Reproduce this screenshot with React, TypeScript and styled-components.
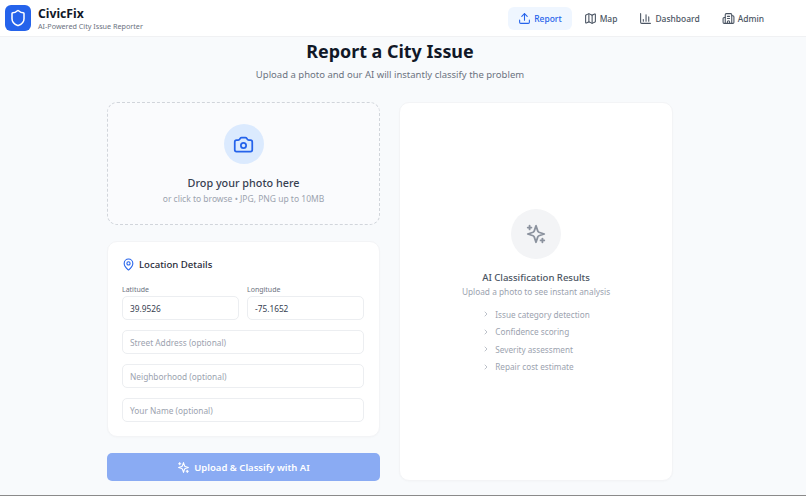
import React from "react";
import styled, { createGlobalStyle } from "styled-components";
import { Shield, Upload, Map, ChartColumn, Building2, Camera, MapPin, ChevronRight } from "lucide-react";

const Global = createGlobalStyle`
  html, body { margin: 0; padding: 0; height: 100%; }
  body { font-family: "Noto Sans", "Open Sans", sans-serif; background: #f8fafc; overflow: hidden; }
  #root { height: 496px; }
`;

const Page = styled.div`
  width: 806px; height: 496px; box-sizing: border-box; overflow: hidden;
  border-bottom: 1px solid #8a8a8a; display: flex; flex-direction: column;
`;
const Header = styled.header`
  height: 37px; flex: none; box-sizing: border-box; background: #fff; border-bottom: 1px solid #f0f1f3;
  display: flex; align-items: center; justify-content: space-between; padding: 0 32px 0 5px;
`;
const Brand = styled.div`display: flex; align-items: center; gap: 7px;`;
const Logo = styled.div`
  width: 26px; height: 26px; border-radius: 6px; background: #2563eb; color: #fff;
  display: flex; align-items: center; justify-content: center;
`;
const BrandText = styled.div`display: flex; flex-direction: column;`;
const BrandName = styled.div`font-size: 12.2px; font-weight: 700; color: #111827; line-height: 15px;`;
const BrandSub = styled.div`font-size: 7.2px; color: #6b7280; line-height: 10px;`;
const Nav = styled.nav`display: flex; align-items: center; gap: 2px;`;
const NavItem = styled.div<{ $active?: boolean }>`
  height: 23px; padding: 0 10px; border-radius: 6px; display: flex; align-items: center; gap: 3px;
  font-size: 8.45px; font-weight: 500; color: ${p => (p.$active ? "#2563eb" : "#4b5563")};
  background: ${p => (p.$active ? "#eff6ff" : "transparent")};
`;
const Main = styled.main`flex: 1; display: flex; flex-direction: column; align-items: center; padding-right: 26px;`;
const Title = styled.h1`margin: 2px 0 0; font-size: 17.9px; line-height: 24px; font-weight: 700; color: #111827;`;
const Subtitle = styled.p`margin: 5px 0 0; font-size: 9.5px; line-height: 14px; color: #6b7280;`;
const Columns = styled.div`
  margin-top: 20px; width: 566px; display: grid; grid-template-columns: 273px 274px; gap: 19px;
`;
const Left = styled.div`display: flex; flex-direction: column; gap: 16px;`;
const Drop = styled.div`
  height: 123px; box-sizing: border-box; border: 1px dashed #d1d5db; border-radius: 10px; background: #fafbfd;
  display: flex; flex-direction: column; align-items: center; padding-top: 21px;
`;
const CameraCircle = styled.div`
  width: 40px; height: 40px; border-radius: 50%; background: #dbeafe; color: #2563eb;
  display: flex; align-items: center; justify-content: center;
`;
const DropTitle = styled.div`margin-top: 12px; font-size: 10.8px; line-height: 14px; font-weight: 500; color: #374151;`;
const DropSub = styled.div`margin-top: 3px; font-size: 8.5px; line-height: 12px; color: #9ca3af;`;
const Card = styled.section`
  background: #fff; border: 1px solid #f3f4f6; border-radius: 10px;
  box-shadow: 0 1px 2px rgba(0,0,0,.02); box-sizing: border-box;
`;
const LocationCard = styled(Card)`
  padding: 14px 15px 14px 14px; height: 196px; display: flex; flex-direction: column;
`;
const CardHead = styled.div`display: flex; align-items: center; gap: 4px; height: 16px; font-size: 9.6px; font-weight: 500; color: #1f2937;`;
const TwoCols = styled.div`margin-top: 13px; display: grid; grid-template-columns: 1fr 1fr; gap: 8px;`;
const Field = styled.div`display: flex; flex-direction: column;`;
const Label = styled.div`font-size: 7px; line-height: 10px; color: #6b7280; margin-bottom: 1px;`;
const Input = styled.div<{ $placeholder?: boolean }>`
  height: 24px; box-sizing: border-box; border: 1px solid #eceef1; border-radius: 5px; padding: 0 7px;
  display: flex; align-items: center; font-size: 8.3px; color: ${p => (p.$placeholder ? "#9ca3af" : "#374151")};
  margin-top: ${p => (p.$placeholder ? "10px" : "0")};
`;
const Submit = styled.div`
  height: 28px; border-radius: 5px; background: #8aabf3; color: #fff;
  display: flex; align-items: center; justify-content: center; gap: 4px; font-size: 9.5px; font-weight: 600;
`;
const Results = styled(Card)`
  height: 379px; display: flex; flex-direction: column; align-items: center; padding-top: 106px;
`;
const SparkCircle = styled.div`
  width: 50px; height: 50px; border-radius: 50%; background: #f3f4f6; color: #8b929e;
  display: flex; align-items: center; justify-content: center;
`;
const ResultTitle = styled.div`margin-top: 12px; font-size: 9.55px; line-height: 14px; font-weight: 500; color: #4b5563;`;
const ResultSub = styled.div`font-size: 8.3px; line-height: 14px; color: #9ca3af;`;
const Features = styled.ul`list-style: none; margin: 9px 0 0; padding: 0; display: flex; flex-direction: column; gap: 5.6px;`;
const Feature = styled.li`
  display: flex; align-items: center; gap: 5px; height: 12px; font-size: 8.2px; color: #9ca3af;
`;

const SparkIcon = ({ size }: { size: number }) => (
  <svg width={size} height={size} viewBox="0 0 24 24" fill="none" stroke="currentColor" strokeWidth={2} strokeLinecap="round" strokeLinejoin="round">
    <path d="m12 3-1.912 5.813a2 2 0 0 1-1.275 1.275L3 12l5.813 1.912a2 2 0 0 1 1.275 1.275L12 21l1.912-5.813a2 2 0 0 1 1.275-1.275L21 12l-5.813-1.912a2 2 0 0 1-1.275-1.275L12 3Z" />
    <path d="M5 3v4" /><path d="M19 17v4" /><path d="M3 5h4" /><path d="M17 19h4" />
  </svg>
);

const features = ["Issue category detection", "Confidence scoring", "Severity assessment", "Repair cost estimate"];

export default function App() {
  return (
    <Page>
      <Global />
      <Header>
        <Brand>
          <Logo><Shield size={18} strokeWidth={2} /></Logo>
          <BrandText>
            <BrandName>CivicFix</BrandName>
            <BrandSub>AI-Powered City Issue Reporter</BrandSub>
          </BrandText>
        </Brand>
        <Nav>
          <NavItem $active><Upload size={13} />Report</NavItem>
          <NavItem><Map size={13} />Map</NavItem>
          <NavItem><ChartColumn size={13} />Dashboard</NavItem>
          <NavItem><Building2 size={13} />Admin</NavItem>
        </Nav>
      </Header>
      <Main>
        <Title>Report a City Issue</Title>
        <Subtitle>Upload a photo and our AI will instantly classify the problem</Subtitle>
        <Columns>
          <Left>
            <Drop>
              <CameraCircle><Camera size={21} /></CameraCircle>
              <DropTitle>Drop your photo here</DropTitle>
              <DropSub>or click to browse • JPG, PNG up to 10MB</DropSub>
            </Drop>
            <LocationCard>
              <CardHead><MapPin size={13} color="#2563eb" />Location Details</CardHead>
              <TwoCols>
                <Field><Label>Latitude</Label><Input>39.9526</Input></Field>
                <Field><Label>Longitude</Label><Input>-75.1652</Input></Field>
              </TwoCols>
              <Input $placeholder>Street Address (optional)</Input>
              <Input $placeholder>Neighborhood (optional)</Input>
              <Input $placeholder>Your Name (optional)</Input>
            </LocationCard>
            <Submit><SparkIcon size={13} />Upload &amp; Classify with AI</Submit>
          </Left>
          <Results>
            <SparkCircle><SparkIcon size={22} /></SparkCircle>
            <ResultTitle>AI Classification Results</ResultTitle>
            <ResultSub>Upload a photo to see instant analysis</ResultSub>
            <Features>
              {features.map(f => (
                <Feature key={f}><ChevronRight size={8} />{f}</Feature>
              ))}
            </Features>
          </Results>
        </Columns>
      </Main>
    </Page>
  );
}
